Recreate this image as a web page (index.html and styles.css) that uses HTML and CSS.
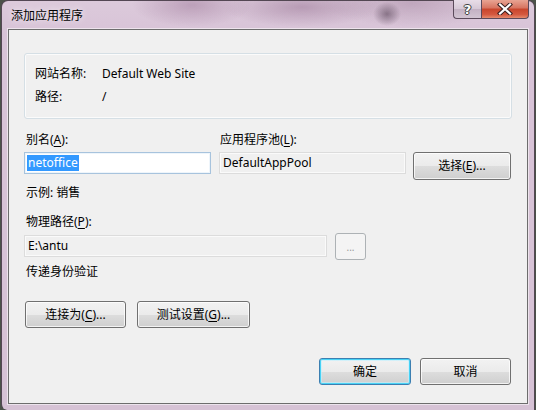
FILE: index.html
```html
<!DOCTYPE html>
<html>
<head>
<meta charset="utf-8">
<link rel="stylesheet" href="styles.css">
</head>
<body>
<div class="window">
  <div class="titlebar">
    <div class="title">添加应用程序</div>
    <div class="caption-btns">
      <div class="cap help">?</div>
      <div class="cap close">
        <svg width="16" height="12" viewBox="0 0 16 12">
          <path d="M3 1.5 L13 10.5 M13 1.5 L3 10.5" stroke="#3a2020" stroke-width="4.2" stroke-linecap="square" fill="none"/>
          <path d="M3 1.5 L13 10.5 M13 1.5 L3 10.5" stroke="#ffffff" stroke-width="2.2" stroke-linecap="square" fill="none"/>
        </svg>
      </div>
    </div>
  </div>
  <div class="client">
    <div class="group">
      <div class="info-row"><span class="info-key">网站名称:</span><span>Default Web Site</span></div>
      <div class="info-row"><span class="info-key">路径:</span><span>/</span></div>
    </div>

    <div class="row labels">
      <div class="col">别名(<u>A</u>):</div>
      <div class="col">应用程序池(<u>L</u>):</div>
    </div>
    <div class="row inputs">
      <div class="textbox focused"><span class="sel">netoffice</span></div>
      <div class="textbox readonly">DefaultAppPool</div>
      <button class="btn select-btn">选择(<u>E</u>)...</button>
    </div>

    <div class="plain example">示例: 销售</div>

    <div class="plain path-label">物理路径(<u>P</u>):</div>
    <div class="row path-row">
      <div class="textbox readonly path-box">E:\antu</div>
      <button class="btn disabled browse">...</button>
    </div>

    <div class="plain pass">传递身份验证</div>

    <div class="row action-row">
      <button class="btn connect">连接为(<u>C</u>)...</button>
      <button class="btn test">测试设置(<u>G</u>)...</button>
    </div>

    <div class="row footer">
      <button class="btn default ok">确定</button>
      <button class="btn cancel">取消</button>
    </div>
  </div>
</div>
</body>
</html>
```

FILE: styles.css
```css
* { box-sizing: border-box; }
html, body { margin: 0; padding: 0; }
body {
  width: 536px;
  height: 410px;
  overflow: hidden;
  background: #4b5249;
  font-family: "Noto Sans", "Noto Sans CJK SC", sans-serif;
  font-size: 12px;
  color: #000;
}
.window {
  width: 534px;
  height: 410px;
  margin-left: 1px;
  border-radius: 7px 7px 0 6px;
  border: 1px solid rgba(40, 30, 40, 0.75);
  border-bottom: none;
  background:
    radial-gradient(ellipse 60px 22px at 190px 4px, rgba(150,110,145,0.45), transparent),
    radial-gradient(ellipse 80px 20px at 300px 6px, rgba(140,100,135,0.45), transparent),
    radial-gradient(ellipse 14px 12px at 385px 13px, rgba(80,60,80,0.55), transparent),
    radial-gradient(ellipse 90px 24px at 410px 2px, rgba(150,115,145,0.4), transparent),
    linear-gradient(180deg, #dccadb 0%, #d8c3d7 8%, #d6c2d5 100%);
  display: flex;
  flex-direction: column;
  padding: 0 6px 6px 6px;
}
.titlebar {
  height: 28px;
  display: flex;
  justify-content: space-between;
  align-items: flex-start;
}
.title {
  padding: 6px 0 0 3px;
  font-family: "Noto Sans CJK SC", sans-serif;
  font-size: 12px;
  line-height: 16px;
  color: #000;
  text-shadow: 0 0 6px rgba(255,255,255,0.9);
}
.caption-btns {
  display: flex;
  margin-right: -1px;
  margin-top: -1px;
}
.cap {
  height: 19px;
  border: 1px solid #5b4a5b;
  border-top: none;
  display: flex;
  align-items: center;
  justify-content: center;
}
.help {
  width: 28px;
  border-radius: 0 0 0 4px;
  border-right: none;
  background: linear-gradient(180deg, #e8dde8 0%, #d6c8d6 50%, #c3b1c3 51%, #d2c4d2 100%);
  color: #fff;
  font-family: "DejaVu Sans", sans-serif;
  font-weight: bold;
  font-size: 13px;
  line-height: 1;
  text-shadow: 0 0 1px #333, 1px 0 0 #444, -1px 0 0 #444, 0 1px 0 #444, 0 -1px 0 #444;
}
.close {
  width: 48px;
  border-radius: 0 0 4px 0;
  background: linear-gradient(180deg, #e8a493 0%, #d7735f 45%, #c8452c 50%, #d4583f 80%, #e58b6e 100%);
}
.client {
  flex: 1;
  background: #f0f0f0;
  border: 1px solid #6d6d6d;
  box-shadow: 0 0 0 1px rgba(255,255,255,0.55);
  padding: 23px 0 0 15px;
  display: flex;
  flex-direction: column;
  align-items: flex-start;
  line-height: 16px;
}
.group {
  width: 488px;
  height: 66px;
  border: 1px solid #d5dfe5;
  border-radius: 3px;
  box-shadow: inset 0 0 0 1px #fbfbfb;
  padding: 12px 0 0 10px;
  display: flex;
  flex-direction: column;
  gap: 7px;
}
.info-row { display: flex; }
.info-key { width: 67px; }
.row { display: flex; }
.labels { margin-top: 13px; padding-left: 2px; }
.labels .col:first-child { width: 194px; }
.inputs { margin-top: 4px; align-items: flex-start; }
.textbox {
  height: 22px;
  width: 187px;
  padding: 2px 3px;
  line-height: 16px;
  border: 1px solid #dcdcdc;
  box-shadow: inset 0 0 0 1px #fafafa;
  white-space: nowrap;
}
.textbox.focused {
  background: #fff;
  border-color: #a7c3dd;
  box-shadow: inset 0 0 0 1px #eef5fb;
  padding-left: 2px;
}
.sel { background: #3399ff; color: #fff; display: inline-block; padding: 0 1px; }
.textbox.readonly { background: #f0f0f0; }
.inputs .textbox + .textbox { margin-left: 8px; }
.btn {
  font-family: "Noto Sans", "Noto Sans CJK SC", sans-serif;
  font-size: 12px;
  line-height: 16px;
  color: #000;
  padding: 0;
  border: 1px solid #707070;
  border-radius: 3px;
  background: linear-gradient(180deg, #f2f2f2 0%, #ebebeb 50%, #dddddd 51%, #cfcfcf 100%);
  box-shadow: inset 0 0 0 1px rgba(255,255,255,0.75);
  height: 27px;
}
.select-btn { width: 98px; height: 28px; margin-left: 7px; }
.example { margin-top: 5px; padding-left: 2px; }
.plain { padding-left: 2px; }
.path-label { margin-top: 13px; }
.path-row { margin-top: 3px; align-items: flex-start; }
.path-box { width: 303px; margin-top: 2px; }
.browse { width: 31px; margin-left: 8px; }
.btn.disabled {
  background: #f4f4f4;
  border-color: #adb2b5;
  color: #9a9a9a;
  box-shadow: none;
  font-size: 10px;
}
.pass { margin-top: 4px; }
.action-row { margin-top: 21px; margin-left: 1px; gap: 11px; }
.connect { width: 101px; }
.test { width: 113px; }
.footer { margin-top: 30px; margin-left: 295px; gap: 9px; }
.ok { width: 92px; }
.cancel { width: 91px; }
.btn.default {
  border-color: #3c7fb1;
  box-shadow: inset 0 0 0 1px #48d2f5, inset 0 0 0 2px rgba(190,240,255,0.6);
}
u { text-decoration: underline; text-underline-offset: 2px; }
```
